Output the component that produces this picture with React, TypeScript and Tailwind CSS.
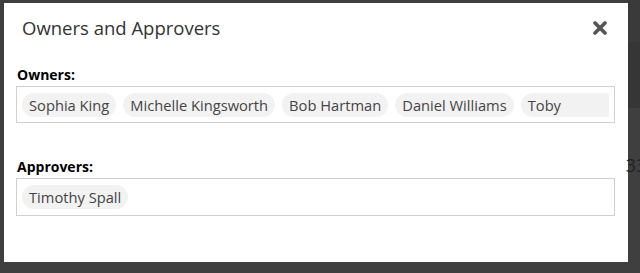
const owners = ['Sophia King', 'Michelle Kingsworth', 'Bob Hartman', 'Daniel Williams']
const approvers = ['Timothy Spall']

function Chip({ name }: { name: string }) {
  return (
    <span className="h-[24px] px-[7px] rounded-full bg-[#f2f2f2] text-[#444] text-[14.7px] leading-[24px] whitespace-nowrap">
      {name}
    </span>
  )
}

export default function App() {
  return (
    <div
      className="w-[640px] h-[273px] bg-[#3f3f3f] flex overflow-hidden"
      style={{ fontFamily: '"Open Sans", "Noto Sans", sans-serif' }}
    >
      {/* modal */}
      <div className="ml-[4px] mt-[3px] w-[625px] h-[259px] bg-white flex flex-col pl-[12px] pr-[13px]">
        <div className="flex items-center justify-between h-[50px] pl-[6px] pr-[8px]">
          <h2 className="text-[18.5px] text-[#333]">Owners and Approvers</h2>
          <svg width="14" height="14" viewBox="0 0 14 14">
            <path d="M2 2 L12 12 M12 2 L2 12" stroke="#555" strokeWidth="3.6" strokeLinecap="round" />
          </svg>
        </div>

        <div className="mt-[13px] text-[14px] font-bold text-black leading-[18px] pl-[1px]">Owners:</div>
        <div className="mt-[2px] h-[37px] border border-[#d0d0d0] flex items-center gap-[7px] px-[5px]">
          {owners.map(o => <Chip key={o} name={o} />)}
          <span className="h-[24px] w-[88px] pl-[7px] rounded-l-full bg-[#f2f2f2] text-[#444] text-[14.7px] leading-[24px]">Toby</span>
        </div>

        <div className="mt-[35px] text-[14px] font-bold text-black leading-[18px] pl-[1px]">Approvers:</div>
        <div className="mt-[2px] h-[38px] border border-[#d0d0d0] flex items-center gap-[7px] px-[5px]">
          {approvers.map(o => <Chip key={o} name={o} />)}
        </div>
      </div>

      {/* page behind the overlay, right edge */}
      <div className="flex-1 flex flex-col">
        <div className="h-[42px] bg-[#3a3a3a]" />
        <div className="h-[66px] bg-[#363636]" />
        <div className="h-[47px] bg-[#3f3f3f]" />
        <div className="text-[18px] leading-[20px] text-[#222] -ml-[2px] whitespace-nowrap">33</div>
      </div>
    </div>
  )
}
